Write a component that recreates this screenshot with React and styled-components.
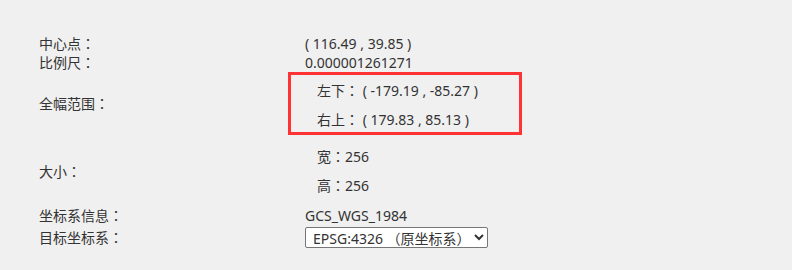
import React from "react";
import styled, { createGlobalStyle } from "styled-components";

const GlobalStyle = createGlobalStyle`
  html, body {
    margin: 0;
    padding: 0;
    background: #f0f0f0;
  }
  body {
    font-family: "Noto Sans", "Noto Sans CJK SC", sans-serif;
    font-size: 14px;
    color: #333;
  }
`;

const Panel = styled.div`
  width: 792px;
  height: 270px;
  box-sizing: border-box;
  padding: 34px 0 0 39px;
  background: #f0f0f0;
  line-height: 19px;
`;

const Row = styled.div`
  display: grid;
  grid-template-columns: 266px 1fr;
  align-items: center;
  padding: ${(p) => p.$pad || "0"};
  min-height: ${(p) => p.$h || "19px"};
`;

const Label = styled.div`
  white-space: nowrap;
`;

const Value = styled.div`
  white-space: nowrap;
`;

// full-width colon, centred in its box like the original UI font
const Colon = styled.span`
  font-family: "Noto Sans CJK TC", "Noto Sans CJK SC", sans-serif;
`;

const SubList = styled.div`
  display: flex;
  flex-direction: column;
  gap: 10px;
  padding-left: 12px;
`;

const Highlight = styled.div`
  box-sizing: border-box;
  width: 234px;
  margin-left: -17px;
  padding: 6px 0 3px 14px;
  border: 3px solid #f33;
`;

const Select = styled.select`
  width: 183px;
  height: 21px;
  box-sizing: border-box;
  padding: 0 0 0 3px;
  font-family: "Noto Sans", "Noto Sans CJK SC", sans-serif;
  font-size: 14px;
  color: #333;
  background: #fff;
  border: 1px solid #767676;
  border-radius: 2px;
`;

const C = () => <Colon>：</Colon>;

export default function App() {
  return (
    <>
      <GlobalStyle />
      <Panel>
        <Row>
          <Label>中心点<C /></Label>
          <Value>( 116.49 , 39.85 )</Value>
        </Row>
        <Row>
          <Label>比例尺<C /></Label>
          <Value>0.000001261271</Value>
        </Row>
        <Row>
          <Label>全幅范围<C /></Label>
          <Value>
            <Highlight>
              <SubList>
                <span>左下<C /> ( -179.19 , -85.27 )</span>
                <span>右上<C /> ( 179.83 , 85.13 )</span>
              </SubList>
            </Highlight>
          </Value>
        </Row>
        <Row $pad="12px 0 11px">
          <Label>大小<C /></Label>
          <Value>
            <SubList>
              <span>宽<C />256</span>
              <span>高<C />256</span>
            </SubList>
          </Value>
        </Row>
        <Row>
          <Label>坐标系信息<C /></Label>
          <Value>GCS_WGS_1984</Value>
        </Row>
        <Row $pad="1px 0" $h="23px">
          <Label>目标坐标系<C /></Label>
          <Value>
            <Select defaultValue="4326">
              <option value="4326">EPSG:4326 （原坐标系）</option>
            </Select>
          </Value>
        </Row>
      </Panel>
    </>
  );
}
